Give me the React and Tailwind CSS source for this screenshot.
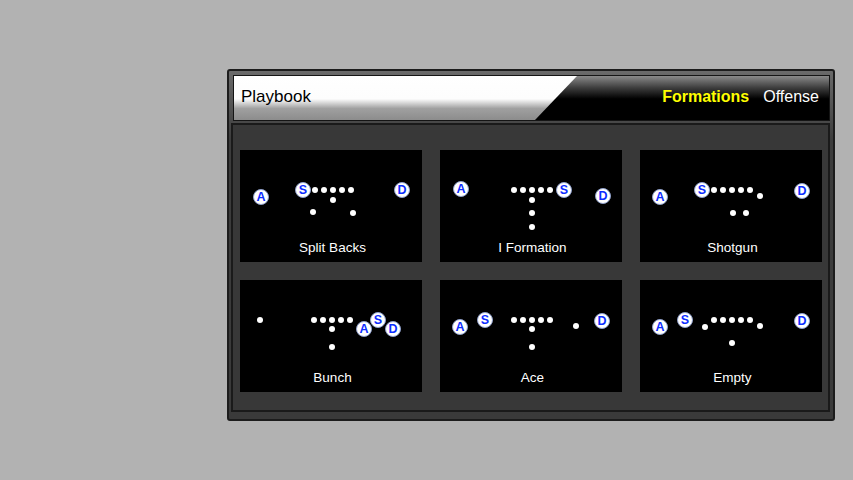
import React from 'react'

// Linemen sit on the same row in every formation
const line = x0 => [0, 1, 2, 3, 4].map(i => [x0 + i * 9, 40])

const formations = [
  {
    name: 'Split Backs',
    dots: [...line(75), [93, 50], [73, 62], [113, 63]],
    badges: [['A', 21, 47], ['S', 63, 40], ['D', 162, 40]],
  },
  {
    name: 'I Formation',
    dots: [...line(74), [92, 50], [92, 63], [92, 77]],
    badges: [['A', 21, 39], ['S', 124, 40], ['D', 163, 46]],
  },
  {
    name: 'Shotgun',
    dots: [...line(74), [120, 46], [93, 63], [106, 63]],
    badges: [['A', 20, 47], ['S', 62, 40], ['D', 162, 41]],
  },
  {
    name: 'Bunch',
    dots: [[20, 40], ...line(74), [92, 49], [92, 67]],
    badges: [['A', 124, 49], ['S', 138, 40], ['D', 153, 49]],
  },
  {
    name: 'Ace',
    dots: [...line(74), [92, 49], [92, 67], [136, 46]],
    badges: [['A', 20, 47], ['S', 45, 40], ['D', 162, 41]],
  },
  {
    name: 'Empty',
    dots: [[65, 47], ...line(74), [120, 46], [92, 63]],
    badges: [['A', 20, 47], ['S', 45, 40], ['D', 162, 41]],
  },
]

const Badge = ({ letter, x, y }) => (
  <div
    className="absolute w-[16px] h-[16px] rounded-full bg-white border border-[#8fa0cc] flex items-center justify-center text-[12.5px] leading-none font-bold text-[#0b2dff]"
    style={{ left: x - 8, top: y - 8 }}
  >
    {letter}
  </div>
)

const FormationCard = ({ formation }) => (
  <div className="w-[182px] h-[112px] bg-black flex flex-col">
    {/* Diagram */}
    <div className="relative h-[90px]">
      {formation.dots.map(([x, y], i) => (
        <div
          key={i}
          className="absolute w-[6px] h-[6px] rounded-full bg-white"
          style={{ left: x - 3, top: y - 3 }}
        />
      ))}
      {formation.badges.map(([l, x, y]) => (
        <Badge key={l} letter={l} x={x} y={y} />
      ))}
    </div>
    {/* Label */}
    <div className="h-[16px] leading-[16px] pl-[3px] text-[13.5px] text-white text-center">{formation.name}</div>
  </div>
)

export default function App() {
  return (
    <div className="w-[853px] h-[480px] bg-[#b2b2b2] pt-[69px] pl-[227px] font-['Liberation_Sans',Arial,sans-serif] overflow-hidden">
      <div className="w-[608px] h-[352px] border-2 border-[#1c1c1c] rounded-[3px] bg-[linear-gradient(to_bottom,#6a6a6a,#3c3c3c_20%,#3a3a3a)]">
        {/* Header bar */}
        <div className="relative ml-[4px] mt-[4px] w-[597px] h-[46px] border border-[#151515] bg-[linear-gradient(to_bottom,#8a8a8a_0%,#3a3a3a_28%,#000_52%,#000_100%)] flex items-center justify-between pb-[3px]">
          <div className="absolute inset-0 [clip-path:polygon(0_0,343px_0,301px_100%,0_100%)] bg-[linear-gradient(to_bottom,#ffffff_0%,#fdfdfd_52%,#a0a0a0_74%,#8c8c8c_100%)]" />
          <span className="relative pl-[7px] text-[17px] text-black">Playbook</span>
          <div className="relative flex gap-[14px] pr-[10px] text-[16px]">
            <span className="font-bold text-[#ffff00]">Formations</span>
            <span className="text-white">Offense</span>
          </div>
        </div>

        {/* Formations panel */}
        <div className="ml-[2px] mt-[2px] w-[599px] h-[289px] border-2 border-[#1a1a1a] bg-[#383838] pt-[25px] pl-[7px]">
          <div className="grid grid-cols-[repeat(3,182px)] gap-[18px]">
            {formations.map(f => (
              <FormationCard key={f.name} formation={f} />
            ))}
          </div>
        </div>
      </div>
    </div>
  )
}
